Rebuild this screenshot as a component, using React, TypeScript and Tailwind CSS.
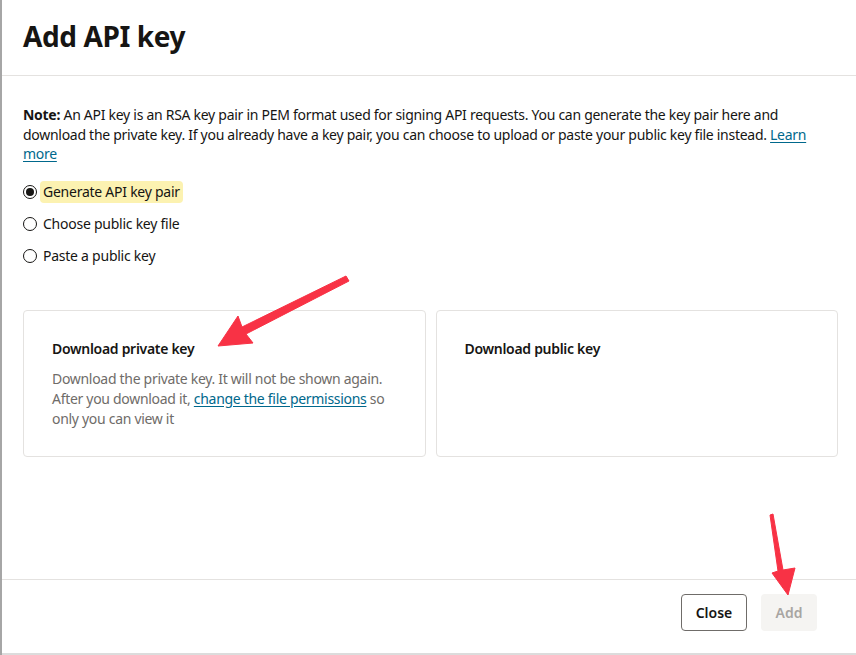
import React from 'react';

const font = { fontFamily: '"Noto Sans", "Open Sans", Arial, sans-serif' };

function Radio({ label, checked, highlight }: { label: string; checked?: boolean; highlight?: boolean }) {
    return (
        <label className="flex items-center h-[22px]">
            <span className="w-[14px] h-[14px] rounded-full border border-[#161513] flex items-center justify-center shrink-0">
                {checked && <span className="w-[8px] h-[8px] rounded-full bg-[#161513]" />}
            </span>
            <span className={`ml-[3px] px-[3px] h-[22px] flex items-center rounded-[4px] text-[14px] tracking-[-0.25px] text-[#161513] ${highlight ? 'bg-[#fcf2b1]' : ''}`}>
                {label}
            </span>
        </label>
    );
}

function Card({ title, children }: { title: string; children?: React.ReactNode }) {
    return (
        <div className="flex-1 h-[147px] border border-[#e4e2e0] rounded-[4px] pl-[28px] pr-[24px] pt-[28px]">
            <h3 className="text-[14px] font-semibold text-[#161513] leading-[20px] tracking-[-0.3px]">{title}</h3>
            {children && <p className="mt-[10px] text-[14px] leading-[20px] tracking-[-0.3px] text-[#6f6c69]">{children}</p>}
        </div>
    );
}

export default function App() {
    return (
        <div className="relative w-[856px] h-[655px] bg-white flex overflow-hidden" style={font}>
            {/* page behind the dialog */}
            <div className="w-[2px] h-full bg-[#a6a6a6]" />

            <div className="flex-1 flex flex-col">
                {/* header */}
                <header className="h-[76px] border-b border-[#e4e2e0] pl-[21px] flex items-center">
                    <h1 className="text-[28px] font-bold text-[#161513] tracking-[-0.4px] mt-[-4px]">Add API key</h1>
                </header>

                {/* body */}
                <div className="flex-1 pl-[21px] pr-[48px] pt-[29px]">
                    <p className="text-[14px] leading-[19.5px] tracking-[-0.28px] text-[#161513]">
                        <span className="font-bold">Note:</span> An API key is an RSA key pair in PEM format used for signing API requests. You can generate the key pair here and download the private key. If you already have a key pair, you can choose to upload or paste your public key file instead.{' '}
                        <a className="text-[#00688c] underline underline-offset-2">Learn more</a>
                    </p>

                    <div className="mt-[17px] flex flex-col gap-[10px]">
                        <Radio label="Generate API key pair" checked highlight />
                        <Radio label="Choose public key file" />
                        <Radio label="Paste a public key" />
                    </div>

                    <div className="mt-[43px] mr-[-30px] flex gap-[10px]">
                        <Card title="Download private key">
                            Download the private key. It will not be shown again. After you download it,{' '}
                            <a className="text-[#00688c] underline underline-offset-2">change the file permissions</a> so only you can view it
                        </Card>
                        <Card title="Download public key" />
                    </div>
                </div>

                {/* footer */}
                <footer className="h-[74px] border-t border-[#e4e2e0] flex items-start pt-[14px] justify-end gap-[14px] pr-[39px]">
                    <button className="h-[37px] w-[66px] border border-[#6f6c69] rounded-[4px] text-[14px] font-semibold text-[#161513]">Close</button>
                    <button className="h-[37px] w-[56px] bg-[#f5f4f2] rounded-[4px] text-[14px] font-semibold text-[#a8a5a2]">Add</button>
                </footer>
                <div className="h-[2px] bg-[#dcdcdc]" />
            </div>

            {/* annotation arrows */}
            <svg className="absolute inset-0 pointer-events-none" width="856" height="655">
                <polygon points="346,276 349,281 246,334 253,343 218,346 238,316 242,327" fill="#f83245" strokeLinejoin="round" stroke="#f83245" strokeWidth="1" />
                <polygon points="770,515 773,514 783,570 795,568 788,595 772,573 778,571" fill="#f83245" strokeLinejoin="round" stroke="#f83245" strokeWidth="1" />
            </svg>
        </div>
    );
}
